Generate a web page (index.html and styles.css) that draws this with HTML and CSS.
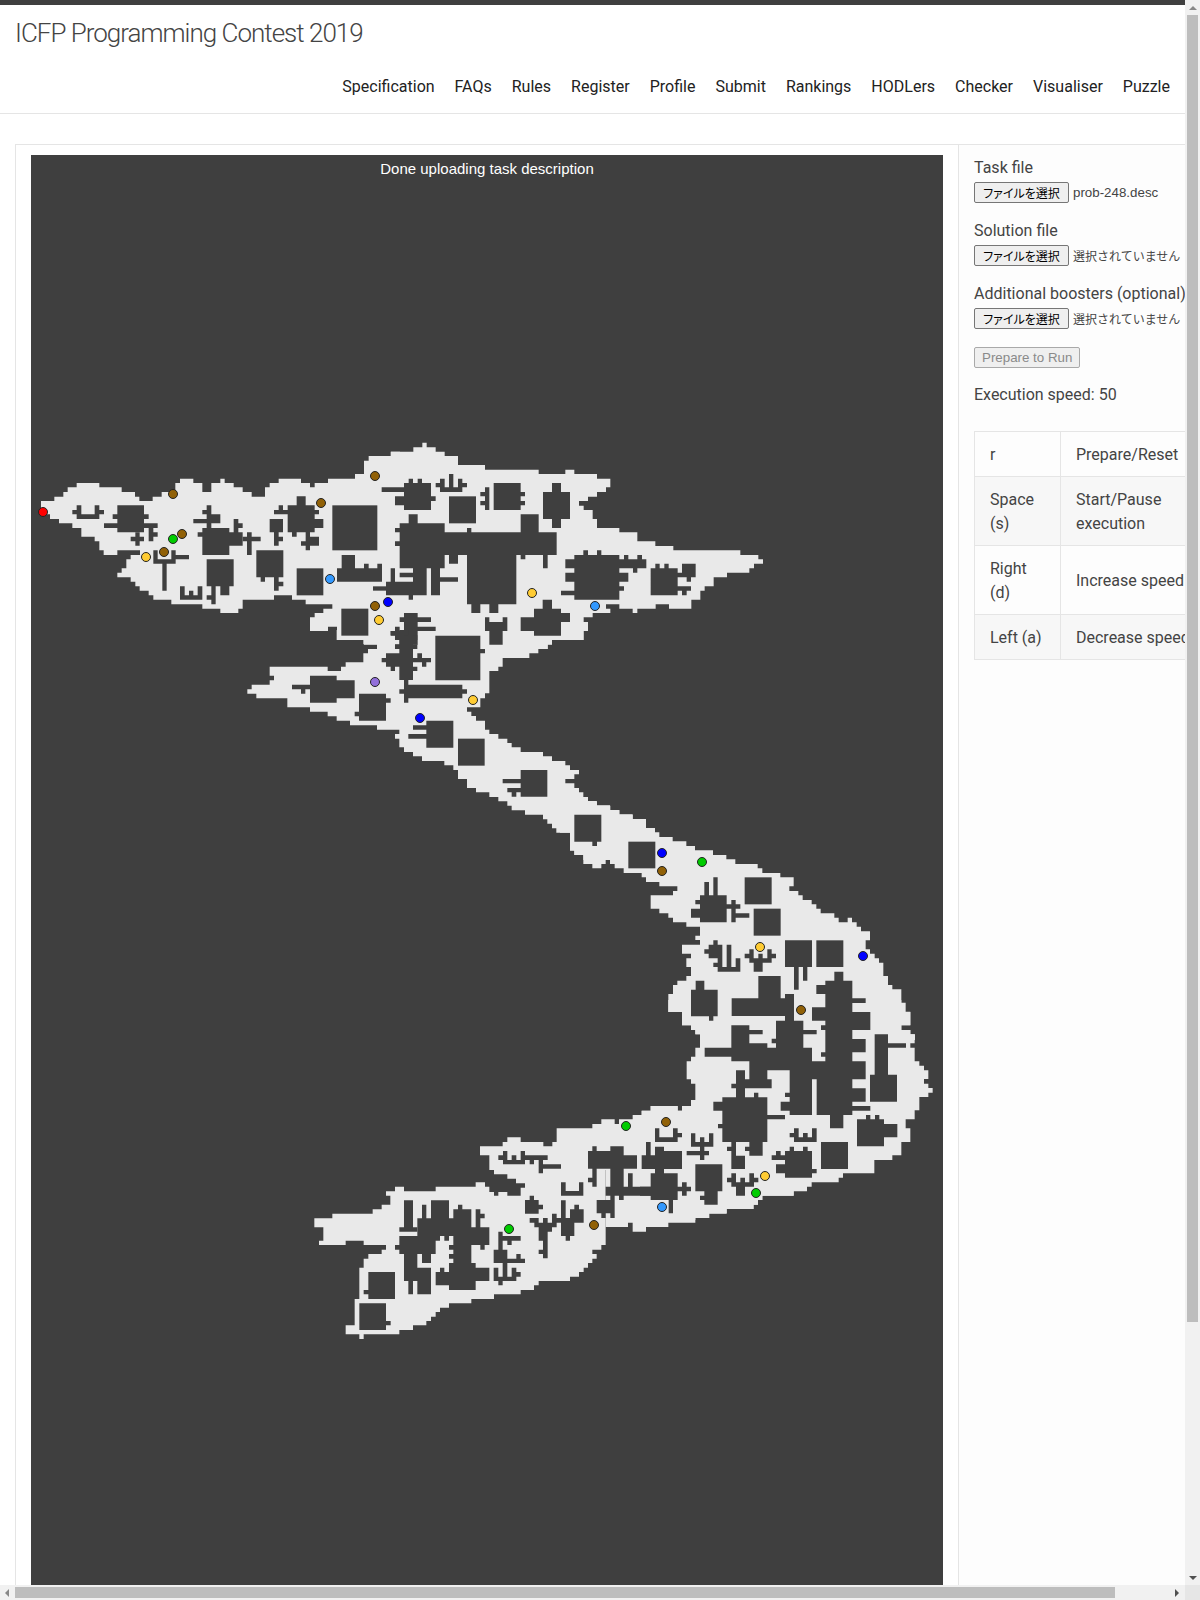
FILE: index.html
```html
<!DOCTYPE html>
<html lang="ja">
<head>
<meta charset="utf-8">
<title>ICFP Programming Contest 2019</title>
<link rel="stylesheet" href="styles.css">
</head>
<body>
<header class="site-header">
  <div class="brand">ICFP Programming Contest 2019</div>
  <nav class="nav">
    <a>Specification</a><a>FAQs</a><a>Rules</a><a>Register</a><a>Profile</a><a>Submit</a><a>Rankings</a><a>HODLers</a><a>Checker</a><a>Visualiser</a><a>Puzzle</a>
  </nav>
</header>
<main class="panel">
  <section class="stage">
    <div class="status">Done uploading task description</div>
    <svg class="map" viewBox="31 155 912 1700" width="912" height="1700" xmlns="http://www.w3.org/2000/svg">
      <rect x="31" y="155" width="912" height="1700" class="sea"/>
      <g class="land">
        <g transform="translate(30 430) scale(0.33333)">
          <polygon points="33,213 73,213 73,200 100,200 100,186 113,186 113,172 140,172 140,159 208,159 208,172 275,172 275,186 315,186 315,200 328,200 328,213 368,213 368,200 395,200 395,186 436,186 436,159 450,159 450,146 490,146 490,159 517,159 517,186 544,186 544,159 571,159 571,146 584,146 584,159 611,159 611,172 638,172 638,186 665,186 665,200 705,200 705,172 719,172 719,159 746,159 746,146 813,146 813,159 840,159 840,172 854,172 854,159 894,159 894,146 975,146 975,132 1002,132 1002,92 1016,92 1016,78 1083,78 1083,65 1110,65 1110,657 1041,657 1041,644 1002,644 1002,630 921,630 921,590 894,590 894,603 840,603 840,562 854,562 854,549 880,549 880,536 907,536 907,523 827,523 827,509 786,509 786,496 732,496 732,509 638,509 638,536 625,536 625,549 571,549 571,536 517,536 517,523 424,523 424,509 370,509 370,496 356,496 356,482 329,482 329,469 316,469 316,455 302,455 302,442 262,442 262,428 275,428 275,415 289,415 289,388 302,388 302,375 330,375 330,361 262,361 262,375 221,375 221,361 208,361 208,334 194,334 194,320 154,320 154,294 127,294 127,280 87,280 87,267 60,267 60,253 33,253"/>
        </g>
        <g transform="translate(380 430) scale(0.33333)">
          <polygon points="0,78 32,78 32,65 100,65 100,52 127,52 127,38 140,38 140,52 167,52 167,65 194,65 194,78 234,78 234,105 315,105 315,119 476,119 476,132 556,132 556,119 583,119 583,132 651,132 651,146 691,146 691,172 678,172 678,186 651,186 651,200 624,200 624,213 597,213 597,227 611,227 611,240 638,240 638,267 651,267 651,294 718,294 718,307 772,307 772,334 826,334 826,348 880,348 880,361 1081,361 1081,375 1135,375 1135,388 1149,388 1149,401 1122,401 1122,415 1108,415 1108,428 1041,428 1041,442 1001,442 1001,469 974,469 974,482 961,482 961,509 934,509 934,536 867,536 867,523 827,523 827,536 772,536 772,549 758,549 758,536 718,536 718,523 678,523 678,536 691,536 691,549 638,549 638,562 611,562 611,576 624,576 624,603 611,603 611,630 516,630 516,644 503,644 503,657 0,657"/>
        </g>
        <g transform="translate(240 630) scale(0.33333)">
          <polygon points="290,0 1030,0 1030,30 936,30 936,43 923,43 923,57 895,57 895,70 868,70 868,84 788,84 788,110 775,110 775,123 748,123 748,190 735,190 735,205 721,205 721,232 681,232 681,245 694,245 694,258 708,258 708,272 735,272 735,299 748,299 748,312 775,312 775,326 802,326 802,339 815,339 815,352 842,352 842,366 909,366 909,379 936,379 936,393 976,393 976,406 990,406 990,420 1017,420 1017,433 1003,433 1003,447 976,447 976,460 1003,460 1003,474 1017,474 1017,487 1030,487 1030,501 1044,501 1044,514 1071,514 1071,527 1111,527 1111,541 1138,541 1138,554 1178,554 1178,568 1200,568 1200,690 1030,690 1030,675 1003,675 1003,662 990,662 990,608 949,608 949,595 936,595 936,581 922,581 922,568 909,568 909,554 855,554 855,541 815,541 815,527 802,527 802,514 775,514 775,501 748,501 748,487 708,487 708,474 681,474 681,447 654,447 654,420 640,420 640,406 613,406 613,393 546,393 546,379 519,379 519,366 492,366 492,352 478,352 478,326 465,326 465,312 478,312 478,299 411,299 411,286 330,286 330,272 290,272 290,259 263,259 263,245 210,245 210,232 142,232 142,205 49,205 49,191 22,191 22,178 35,178 35,164 89,164 89,151 102,151 102,137 89,137 89,110 263,110 263,123 303,123 303,110 317,110 317,97 370,97 370,70 384,70 384,57 411,57 411,43 370,43 370,30 290,30"/>
        </g>
        <g transform="translate(560 800) scale(0.33333)">
          <polygon points="0,0 83,0 83,3 110,3 110,16 150,16 150,30 178,30 178,43 218,43 218,57 258,57 258,84 285,84 285,97 298,97 298,111 338,111 338,124 379,124 379,138 405,138 405,151 459,151 459,165 499,165 499,178 526,178 526,192 593,192 593,205 607,205 607,219 661,219 661,232 701,232 701,259 688,259 688,273 715,273 715,286 728,286 728,300 755,300 755,313 769,313 769,326 782,326 782,340 823,340 823,353 836,353 836,367 863,367 863,353 876,353 876,367 890,367 890,380 903,380 903,394 930,394 930,421 917,421 917,448 930,448 930,461 944,461 944,475 957,475 957,488 970,488 970,528 984,528 984,555 997,555 997,568 1024,568 1024,608 1037,608 1037,635 1051,635 1051,676 1024,676 1024,690 1051,690 1051,703 1065,703 1065,720 420,720 420,703 406,703 406,690 393,690 393,676 366,676 366,636 325,636 325,582 339,582 339,555 352,555 352,542 379,542 379,528 393,528 393,501 379,501 379,475 393,475 393,461 366,461 366,434 420,434 420,420 406,420 406,407 420,407 420,380 379,380 379,367 339,367 339,353 325,353 325,340 298,340 298,326 272,326 272,286 339,286 339,273 352,273 352,259 298,259 298,246 258,246 258,232 245,232 245,219 191,219 191,205 164,205 164,192 150,192 150,178 137,178 137,192 124,192 124,205 97,205 97,192 70,192 70,165 43,165 43,151 30,151 30,98 0,98"/>
        </g>
        <g transform="translate(640 1000) scale(0.33333)">
          <polygon points="85,0 85,36 126,36 126,76 153,76 153,90 166,90 166,103 180,103 180,143 166,143 166,170 153,170 153,184 140,184 140,238 153,238 153,251 166,251 166,305 153,305 153,318 126,318 126,332 113,332 113,318 32,318 32,332 5,332 5,345 0,345 0,660 166,660 166,654 208,654 208,640 260,640 260,627 340,627 340,614 354,614 354,600 367,600 367,587 461,587 461,574 501,574 501,560 515,560 515,547 596,547 596,533 609,533 609,520 703,520 703,480 757,480 757,466 784,466 784,426 811,426 811,385 797,385 797,358 824,358 824,331 838,331 838,291 865,291 865,278 878,278 878,264 865,264 865,251 852,251 852,237 865,237 865,211 852,211 852,197 838,197 838,184 824,184 824,143 811,143 811,130 824,130 824,103 811,103 811,90 784,90 784,76 811,76 811,36 784,36 784,0"/>
        </g>
        <g transform="translate(470 1100) scale(0.33333)">
          <polygon points="990,0 663,0 663,18 636,18 636,32 623,32 623,18 542,18 542,32 515,32 515,45 488,45 488,58 447,58 447,72 434,72 434,58 394,58 394,72 367,72 367,85 260,85 260,126 247,126 247,139 220,139 220,126 152,126 152,112 112,112 112,126 98,126 98,139 30,139 30,166 58,166 58,210 407,210 407,381 474,381 474,368 488,368 488,395 528,395 528,381 595,381 595,368 676,368 676,354 716,354 716,341 770,341 770,327 851,327 851,314 864,314 864,300 877,300 877,287 971,287 971,273 990,273"/>
        </g>
        <g transform="translate(300 1170) scale(0.33333)">
          <polygon points="568,0 582,0 582,13 622,13 622,26 648,26 648,40 675,40 675,53 662,53 662,77 622,77 622,66 595,66 595,77 582,77 582,66 568,66 568,50 555,50 555,37 527,37 527,50 407,50 407,64 312,64 312,50 285,50 285,64 258,64 258,77 271,77 271,104 245,104 245,118 218,118 218,131 97,131 97,145 43,145 43,172 70,172 70,212 57,212 57,225 137,225 137,212 191,212 191,225 258,225 258,239 245,239 245,252 205,252 205,266 191,266 191,293 178,293 178,387 164,387 164,466 137,466 137,493 178,493 178,507 191,507 191,493 298,493 298,480 339,480 339,466 379,466 379,453 393,453 393,440 407,440 407,426 420,426 420,413 447,413 447,400 514,400 514,387 582,387 582,373 662,373 662,360 702,360 702,346 716,346 716,333 810,333 810,320 837,320 837,306 851,306 851,293 864,293 864,279 877,279 877,266 890,266 890,252 877,252 877,239 904,239 904,225 917,225 917,0"/>
        </g>
      </g>
      <g class="wall">
        <g transform="translate(30 430) scale(0.33333)">
          <polygon points="140,226 154,226 154,253 194,253 194,226 208,226 208,240 222,240 222,253 208,253 208,267 140,267 140,253 127,253 127,240 140,240"/>
          <polygon points="262,226 342,226 342,253 356,253 356,267 342,267 342,280 383,280 383,294 370,294 370,307 383,307 383,320 370,320 370,334 356,334 356,294 342,294 342,307 262,307 262,294 222,294 222,280 262,280 262,267 248,267 248,253 262,253"/>
          <polygon points="316,307 329,307 329,320 342,320 342,334 329,334 329,347 316,347 316,334 302,334 302,320 316,320"/>
          <polygon points="530,226 544,226 544,253 571,253 571,280 544,280 544,294 530,294 530,280 490,280 490,267 530,267 530,253 517,253 517,240 530,240"/>
          <polygon points="517,294 598,294 598,307 611,307 611,267 625,267 625,280 638,280 638,294 625,294 625,307 638,307 638,347 598,347 598,375 517,375 517,320 503,320 503,307 517,307"/>
          <polygon points="651,307 665,307 665,320 692,320 692,334 665,334 665,375 651,375 651,334 638,334 638,320 651,320"/>
          <polygon points="800,199 827,199 827,226 854,226 854,240 867,240 867,253 854,253 854,267 880,267 880,294 854,294 854,307 840,307 840,320 867,320 867,347 840,347 840,361 827,361 827,347 813,347 813,334 827,334 827,307 800,307 800,320 786,320 786,307 773,307 773,267 759,267 759,307 746,307 746,320 759,320 759,334 746,334 746,347 732,347 732,307 719,307 719,267 773,267 773,253 732,253 732,240 746,240 746,226 759,226 759,240 773,240 773,226 800,226"/>
          <rect x="907" y="226" width="135" height="135"/>
          <polygon points="370,361 383,361 383,388 424,388 424,361 437,361 437,375 477,375 477,388 437,388 437,401 410,401 410,482 397,482 397,401 370,401"/>
          <polygon points="530,388 611,388 611,469 598,469 598,496 571,496 571,469 557,469 557,523 544,523 544,509 530,509 530,496 544,496 544,469 530,469"/>
          <polygon points="450,469 464,469 464,496 477,496 477,482 490,482 490,496 503,496 503,469 517,469 517,509 450,509"/>
          <polygon points="679,361 760,361 760,442 746,442 746,455 760,455 760,469 746,469 746,482 732,482 732,442 705,442 705,455 692,455 692,442 679,442"/>
          <rect x="800" y="415" width="80" height="81"/>
          <polygon points="935,375 975,375 975,415 1002,415 1002,401 1016,401 1016,415 1042,415 1042,401 1056,401 1056,455 921,455 921,415 935,415"/>
          <rect x="1029" y="469" width="50" height="13"/>
          <rect x="934" y="536" width="81" height="81"/>
        </g>
        <g transform="translate(380 430) scale(0.33333)">
          <polygon points="5,172 72,172 72,159 86,159 86,146 99,146 99,159 113,159 113,146 126,146 126,159 153,159 153,199 167,199 167,213 153,213 153,240 72,240 72,226 45,226 45,199 72,199 72,186 5,186"/>
          <polygon points="207,132 220,132 220,172 234,172 234,146 247,146 247,159 261,159 261,172 247,172 247,186 180,186 180,172 167,172 167,159 180,159 180,146 194,146 194,172 207,172"/>
          <rect x="207" y="199" width="81" height="81"/>
          <polygon points="341,159 422,159 422,186 435,186 435,199 422,199 422,213 435,213 435,226 422,226 422,240 341,240"/>
          <polygon points="315,172 328,172 328,240 315,240 315,226 301,226 301,213 315,213 315,199 301,199 301,186 315,186"/>
          <polygon points="516,159 543,159 543,186 570,186 570,267 543,267 543,294 516,294 516,267 489,267 489,186 516,186"/>
          <polygon points="86,253 113,253 113,280 194,280 194,307 261,307 261,294 274,294 274,307 422,307 422,253 476,253 476,307 530,307 530,375 503,375 503,415 489,415 489,375 436,375 436,388 422,388 422,375 409,375 409,523 355,523 355,549 328,549 328,523 301,523 301,549 274,549 274,523 261,523 261,375 234,375 234,401 207,401 207,375 194,375 194,415 180,415 180,442 234,442 234,455 180,455 180,496 153,496 153,415 140,415 140,496 99,496 99,509 86,509 86,496 18,496 18,455 32,455 32,415 45,415 45,455 99,455 99,442 59,442 59,428 99,428 99,415 59,415 59,348 45,348 45,334 59,334 59,307 45,307 45,294 59,294 59,280 86,280"/>
          <polygon points="583,375 610,375 610,361 624,361 624,375 651,375 651,361 664,361 664,375 718,375 718,388 732,388 732,375 745,375 745,388 772,388 772,375 786,375 786,388 799,388 799,415 772,415 772,428 759,428 759,415 718,415 718,428 745,428 745,455 718,455 718,469 732,469 732,482 718,482 718,509 583,509 583,496 543,496 543,482 583,482 583,455 556,455 556,428 583,428 583,415 556,415 556,388 583,388"/>
          <polygon points="812,415 826,415 826,401 839,401 839,415 853,415 853,401 866,401 866,415 893,415 893,428 906,428 906,401 947,401 947,442 933,442 933,455 920,455 920,442 893,442 893,469 933,469 933,482 920,482 920,496 906,496 906,482 893,482 893,496 812,496"/>
          <polygon points="488,509 516,509 516,536 543,536 543,549 570,549 570,576 543,576 543,617 462,617 462,603 422,603 422,562 462,562 462,536 488,536"/>
          <polygon points="315,562 328,562 328,576 368,576 368,562 382,562 382,603 368,603 368,644 328,644 328,603 315,603"/>
          <polygon points="72,549 113,549 113,562 153,562 153,576 113,576 113,590 167,590 167,603 113,603 113,644 99,644 99,657 45,657 45,644 59,644 59,617 32,617 32,603 45,603 45,590 59,590 59,603 72,603 72,576 59,576 59,562 72,562"/>
        </g>
        <g transform="translate(240 630) scale(0.33333)">
          <polygon points="478,0 492,0 492,16 505,16 505,0 519,0 519,16 532,16 532,30 519,30 519,43 532,43 532,57 519,57 519,84 532,84 532,70 546,70 546,84 573,84 573,97 559,97 559,110 546,110 546,97 519,97 519,110 532,110 532,123 519,123 519,150 505,150 505,164 667,164 667,178 681,178 681,191 667,191 667,205 505,205 505,218 492,218 492,191 478,191 478,178 492,178 492,150 478,150 478,110 465,110 465,123 452,123 452,110 438,110 438,97 425,97 425,84 438,84 438,70 478,70 478,57 465,57 465,43 478,43 478,30 465,30 465,16 452,16 452,3 478,3"/>
          <polygon points="586,17 721,17 721,57 735,57 735,70 721,70 721,151 586,151"/>
          <polygon points="210,137 290,137 290,151 344,151 344,205 290,205 290,218 210,218 210,178 196,178 196,191 183,191 183,178 156,178 156,164 210,164"/>
          <polygon points="357,191 438,191 438,205 452,205 452,218 438,218 438,272 357,272 357,259 344,259 344,245 357,245"/>
          <polygon points="519,286 559,286 559,272 640,272 640,353 559,353 559,326 505,326 505,312 559,312 559,299 519,299"/>
          <rect x="654" y="326" width="80" height="81"/>
          <polygon points="842,420 922,420 922,500 842,500 842,487 829,487 829,500 815,500 815,487 802,487 802,474 842,474 842,460 788,460 788,447 842,447"/>
          <polygon points="1003,554 1084,554 1084,635 1071,635 1071,648 1057,648 1057,635 1003,635"/>
        </g>
        <g transform="translate(560 800) scale(0.33333)">
          <rect x="205" y="125" width="81" height="80"/>
          <polygon points="433,246 447,246 447,286 460,286 460,232 473,232 473,286 500,286 500,313 514,313 514,300 527,300 527,313 541,313 541,326 527,326 527,340 568,340 568,353 527,353 527,367 514,367 514,326 500,326 500,367 420,367 420,353 393,353 393,326 420,326 420,313 406,313 406,300 420,300 420,286 433,286"/>
          <rect x="554" y="232" width="81" height="81"/>
          <rect x="581" y="326" width="81" height="81"/>
          <polygon points="675,421 756,421 756,501 742,501 742,542 729,542 729,501 716,501 716,569 702,569 702,501 675,501"/>
          <rect x="769" y="421" width="81" height="80"/>
          <polygon points="460,421 473,421 473,434 487,434 487,501 500,501 500,434 514,434 514,501 527,501 527,475 541,475 541,515 473,515 473,501 460,501 460,488 473,488 473,475 446,475 446,461 433,461 433,448 446,448 446,434 460,434"/>
          <polygon points="568,448 581,448 581,475 595,475 595,461 608,461 608,475 622,475 622,448 635,448 635,461 648,461 648,475 635,475 635,488 608,488 608,515 581,515 581,488 568,488 568,475 554,475 554,461 568,461"/>
          <polygon points="407,542 433,542 433,569 473,569 473,649 460,649 460,662 447,662 447,649 393,649 393,569 407,569"/>
        </g>
        <g transform="translate(640 1000) scale(0.33333)">
          <polygon points="583,-85 610,-85 610,-58 637,-58 637,-5 677,-5 677,9 637,9 637,36 691,36 691,90 637,90 637,117 677,117 677,157 637,157 637,184 677,184 677,238 637,238 637,265 677,265 677,305 637,305 637,318 691,318 691,332 637,332 637,345 610,345 610,385 570,385 570,345 530,345 530,238 516,238 516,345 449,345 449,332 422,332 422,305 449,305 449,291 435,291 435,278 449,278 449,211 382,211 382,238 395,238 395,265 315,265 315,292 342,292 342,278 355,278 355,292 382,292 382,345 435,345 435,358 382,358 382,426 368,426 368,467 328,467 328,453 315,453 315,440 328,440 328,426 288,426 288,467 315,467 315,507 274,507 274,453 261,453 261,440 274,440 274,426 247,426 247,385 234,385 234,372 247,372 247,332 220,332 220,305 247,305 247,292 288,292 288,265 274,265 274,251 288,251 288,211 315,211 315,238 328,238 328,184 274,184 274,170 194,170 194,143 274,143 274,76 328,76 328,90 368,90 368,103 328,103 328,130 382,130 382,143 408,143 408,130 395,130 395,116 408,116 408,62 435,62 435,48 275,48 275,-5 355,-5 355,-72 422,-72 422,-5 435,-5 435,-18 462,-18 462,62 490,62 490,90 530,90 530,103 490,103 490,143 516,143 516,184 556,184 556,170 543,170 543,157 556,157 556,90 543,90 543,76 556,76 556,62 516,62 516,22 556,22 556,-18 529,-18 529,-45 556,-45 556,-58 583,-58"/>
          <polygon points="704,103 744,103 744,130 798,130 798,143 744,143 744,224 771,224 771,305 690,305 690,224 704,224"/>
          <polygon points="651,358 678,358 678,345 691,345 691,358 705,358 705,345 718,345 718,358 732,358 732,372 772,372 772,412 732,412 732,439 651,439"/>
          <rect x="543" y="426" width="81" height="81"/>
          <polygon points="462,385 476,385 476,412 489,412 489,399 503,399 503,412 516,412 516,385 530,385 530,426 462,426 462,412 449,412 449,399 462,399"/>
          <polygon points="449,440 462,440 462,453 489,453 489,440 503,440 503,453 516,453 516,507 530,507 530,520 516,520 516,533 435,533 435,520 408,520 408,493 435,493 435,480 395,480 395,466 408,466 408,453 422,453 422,466 435,466 435,453 449,453"/>
          <polygon points="166,493 247,493 247,574 233,574 233,614 193,614 193,600 180,600 180,587 193,587 193,574 166,574"/>
          <polygon points="261,533 274,533 274,520 288,520 288,547 301,547 301,533 315,533 315,547 328,547 328,520 342,520 342,533 355,533 355,547 342,547 342,560 315,560 315,587 288,587 288,560 274,560 274,547 261,547"/>
          <polygon points="153,400 166,400 166,426 180,426 180,412 193,412 193,426 207,426 207,400 220,400 220,440 193,440 193,453 207,453 207,466 193,466 193,480 180,480 180,466 140,466 140,453 180,453 180,440 153,440"/>
          <polygon points="45,385 58,385 58,412 99,412 99,385 113,385 113,399 126,399 126,412 113,412 113,426 45,426"/>
          <polygon points="18,426 32,426 32,466 45,466 45,440 72,440 72,453 126,453 126,507 72,507 72,520 113,520 113,560 126,560 126,547 140,547 140,560 153,560 153,574 140,574 140,587 126,587 126,574 113,574 113,600 99,600 99,640 86,640 86,600 32,600 32,587 0,587 0,560 32,560 32,520 45,520 45,507 5,507 5,466 18,466"/>
        </g>
        <g transform="translate(470 1100) scale(0.33333)">
          <polygon points="354,153 367,153 367,139 380,139 380,153 421,153 421,139 461,139 461,166 501,166 501,206 461,206 461,260 474,260 474,220 488,220 488,260 545,260 545,287 461,287 461,300 447,300 447,287 434,287 434,354 421,354 421,340 407,340 407,354 394,354 394,340 380,340 380,300 421,300 421,287 407,287 407,260 421,260 421,206 380,206 380,260 367,260 367,247 354,247 354,233 367,233 367,206 354,206"/>
          <polygon points="99,153 112,153 112,180 125,180 125,166 139,166 139,180 152,180 152,153 165,153 165,166 233,166 233,180 219,180 219,193 273,193 273,206 219,206 219,220 206,220 206,180 192,180 192,193 179,193 179,180 165,180 165,193 99,193 99,180 85,180 85,166 99,166"/>
          <polygon points="273,247 287,247 287,273 327,273 327,247 340,247 340,287 273,287"/>
        </g>
        <g transform="translate(300 1170) scale(0.33333)">
          <polygon points="675,90 689,90 689,77 702,77 702,90 716,90 716,104 729,104 729,118 716,118 716,131 675,131"/>
          <polygon points="689,144 716,144 716,158 729,158 729,144 743,144 743,158 756,158 756,131 770,131 770,144 783,144 783,91 797,91 797,144 810,144 810,118 823,118 823,104 837,104 837,118 851,118 851,158 823,158 823,198 810,198 810,212 797,212 797,198 783,198 783,158 770,158 770,172 756,172 756,185 743,185 743,265 729,265 729,252 716,252 716,239 729,239 729,212 716,212 716,172 703,172 703,158 689,158"/>
          <polygon points="312,91 339,91 339,172 352,172 352,185 298,185 298,172 312,172"/>
          <polygon points="366,104 379,104 379,145 393,145 393,91 447,91 447,145 460,145 460,118 474,118 474,104 487,104 487,118 514,118 514,172 527,172 527,118 541,118 541,131 554,131 554,145 541,145 541,172 568,172 568,225 554,225 554,239 541,239 541,225 514,225 514,279 527,279 527,293 568,293 568,333 527,333 527,360 447,360 447,346 407,346 407,306 420,306 420,293 433,293 433,306 447,306 447,279 460,279 460,266 447,266 447,252 460,252 460,239 447,239 447,225 460,225 460,198 447,198 447,212 433,212 433,198 420,198 420,212 407,212 407,252 393,252 393,279 366,279 366,252 352,252 352,293 393,293 393,373 352,373 352,333 339,333 339,373 325,373 325,333 312,333 312,252 298,252 298,239 285,239 285,225 298,225 298,198 352,198 352,145 366,145"/>
          <polygon points="595,185 608,185 608,198 662,198 662,212 635,212 635,225 622,225 622,212 608,212 608,239 622,239 622,266 649,266 649,252 662,252 662,266 675,266 675,279 622,279 622,320 635,320 635,293 649,293 649,306 662,306 662,320 649,320 649,333 608,333 608,346 595,346 595,333 581,333 581,293 595,293 595,320 608,320 608,279 581,279 581,239 595,239"/>
          <polygon points="205,306 285,306 285,387 205,387 205,373 191,373 191,360 205,360"/>
          <polygon points="178,400 258,400 258,453 272,453 272,466 258,466 258,480 178,480"/>
        </g>
      </g>
      <g class="dots">
        <circle class="red" cx="43" cy="512" r="4"/>
        <circle class="brown" cx="173" cy="494" r="4"/><circle class="brown" cx="321" cy="503" r="4"/><circle class="brown" cx="375" cy="476" r="4"/><circle class="brown" cx="182" cy="534" r="4"/><circle class="brown" cx="164" cy="552" r="4"/><circle class="brown" cx="375" cy="606" r="4"/><circle class="brown" cx="662" cy="871" r="4"/><circle class="brown" cx="801" cy="1010" r="4"/><circle class="brown" cx="666" cy="1122" r="4"/><circle class="brown" cx="594" cy="1225" r="4"/>
        <circle class="green" cx="173" cy="539" r="4"/><circle class="green" cx="702" cy="862" r="4"/><circle class="green" cx="756" cy="1193" r="4"/><circle class="green" cx="626" cy="1126" r="4"/><circle class="green" cx="509" cy="1229" r="4"/>
        <circle class="yellow" cx="146" cy="557" r="4"/><circle class="yellow" cx="379" cy="620" r="4"/><circle class="yellow" cx="532" cy="593" r="4"/><circle class="yellow" cx="473" cy="700" r="4"/><circle class="yellow" cx="760" cy="947" r="4"/><circle class="yellow" cx="765" cy="1176" r="4"/>
        <circle class="sky" cx="330" cy="579" r="4"/><circle class="sky" cx="595" cy="606" r="4"/><circle class="sky" cx="662" cy="1207" r="4"/>
        <circle class="blue" cx="388" cy="602" r="4"/><circle class="blue" cx="420" cy="718" r="4"/><circle class="blue" cx="662" cy="853" r="4"/><circle class="blue" cx="863" cy="956" r="4"/>
        <circle class="purple" cx="375" cy="682" r="4"/>
      </g>
    </svg>
  </section>
  <aside class="side">
    <div class="field">
      <label class="field-label">Task file</label>
      <div class="file-row"><button class="file-btn" type="button">ファイルを選択</button><span class="file-name">prob-248.desc</span></div>
    </div>
    <div class="field">
      <label class="field-label">Solution file</label>
      <div class="file-row"><button class="file-btn" type="button">ファイルを選択</button><span class="file-name file-none">選択されていません</span></div>
    </div>
    <div class="field">
      <label class="field-label">Additional boosters (optional)</label>
      <div class="file-row"><button class="file-btn" type="button">ファイルを選択</button><span class="file-name file-none">選択されていません</span></div>
    </div>
    <button class="run-btn" type="button" disabled>Prepare to Run</button>
    <p class="speed">Execution speed: 50</p>
    <table class="keys">
      <tr><td class="key">r</td><td>Prepare/Reset</td></tr>
      <tr><td class="key">Space (s)</td><td>Start/Pause execution</td></tr>
      <tr><td class="key">Right (d)</td><td>Increase speed</td></tr>
      <tr><td class="key">Left (a)</td><td>Decrease speed</td></tr>
    </table>
  </aside>
</main>
<div class="vbar" aria-hidden="true">
  <span class="arrow arrow-up"></span>
  <span class="vthumb"></span>
  <span class="arrow arrow-down"></span>
</div>
<div class="hbar" aria-hidden="true">
  <span class="arrow arrow-left"></span>
  <span class="hthumb"></span>
  <span class="arrow arrow-right"></span>
</div>
<div class="corner" aria-hidden="true"></div>
</body>
</html>
```
FILE: styles.css
```css
html, body {
  height: 1600px;
  overflow: hidden;
}
body {
  margin: 0;
  font-family: Roboto, "Noto Sans", sans-serif;
  font-size: 16px;
  line-height: 24px;
  color: #444;
  background: #fff;
}
.site-header {
  width: 1185px;
  box-sizing: border-box;
  border-top: 5px solid #3f3f3f;
  border-bottom: 1px solid #e5e5e5;
  padding: 0 15px 15px;
  height: 114px;
}
.brand {
  font-weight: 300;
  font-size: 26px;
  line-height: 56px;
  letter-spacing: -1px;
  color: #444;
}
.nav {
  display: flex;
  justify-content: flex-end;
  gap: 20px;
  padding-top: 14px;
  color: #222;
}
.panel {
  display: flex;
  margin: 30px 0 0 15px;
  border: 1px solid #e5e5e5;
  border-bottom: 0;
  width: 1240px;
  box-sizing: border-box;
}
.stage {
  position: relative;
  flex: none;
  width: 912px;
  padding: 10px 15px 0;
}
.map { display: block; }
.sea { fill: #3f3f3f; }
.land { fill: #e9e9e9; }
.wall { fill: #3f3f3f; }
.dots circle { r: 4.5px; stroke: #222; stroke-width: 1; }
.red { fill: #ff0000; }
.brown { fill: #916107; }
.green { fill: #00cc00; }
.yellow { fill: #ffcc33; }
.sky { fill: #3399ff; }
.blue { fill: #0000ff; }
.purple { fill: #9370db; }
.status {
  position: absolute;
  left: 15px;
  right: 15px;
  top: 14px;
  text-align: center;
  font-family: "Liberation Sans", Arial, sans-serif;
  font-size: 15px;
  line-height: 20px;
  color: #fff;
}
.side {
  flex: 1;
  border-left: 1px solid #e5e5e5;
  padding: 11px 15px 0;
  min-width: 0;
  background: #fdfdfd;
}
.field { margin-bottom: 16px; }
.field-label { display: block; white-space: nowrap; }
.file-row {
  display: flex;
  align-items: center;
  gap: 4px;
  margin-top: 2px;
  height: 21px;
  white-space: nowrap;
}
.file-btn, .run-btn {
  box-sizing: border-box;
  height: 21px;
  border: 1px solid #767676;
  border-radius: 2px;
  background: #efefef;
  color: #000;
  line-height: 19px;
}
.file-btn {
  flex: none;
  width: 95px;
  padding: 0;
  font-family: "Noto Sans CJK JP", sans-serif;
  font-size: 12px;
  font-feature-settings: "palt";
}
.run-btn {
  display: block;
  margin-top: 18px;
  padding: 0 7px;
  border-color: #a9a9a9;
  color: #8a8a8a;
  font-family: "Liberation Sans", sans-serif;
  font-size: 13.33px;
}
.file-name {
  font-family: "Liberation Sans", sans-serif;
  font-size: 13.33px;
  color: #444;
}
.file-none {
  font-family: "Noto Sans CJK JP", sans-serif;
  font-size: 12px;
}
.speed { margin: 15px 0 24px; }
.keys {
  border-collapse: collapse;
  width: 250px;
  table-layout: fixed;
}
.keys td {
  border: 1px solid #e5e5e5;
  padding: 11px 15px 9px;
}
.keys .key { width: 55px; }
.keys tr:nth-child(even) td { background: #f7f7f7; }
.vbar, .hbar, .corner {
  position: fixed;
  background: #f1f1f1;
}
.vbar {
  top: 0;
  right: 0;
  bottom: 15px;
  width: 15px;
  display: flex;
  flex-direction: column;
  align-items: center;
}
.hbar {
  left: 0;
  right: 15px;
  bottom: 0;
  height: 15px;
  display: flex;
  align-items: center;
}
.corner {
  right: 0;
  bottom: 0;
  width: 15px;
  height: 15px;
  background: #e6e6e6;
}
.vthumb {
  width: 11px;
  height: 1307px;
  margin-top: 5px;
  background: #bdbdbd;
}
.hthumb {
  width: 1100px;
  height: 11px;
  margin-left: 6px;
  background: #bdbdbd;
}
.arrow {
  width: 0;
  height: 0;
  border-style: solid;
  border-color: transparent;
}
.arrow-up {
  margin-top: 6px;
  border-width: 0 4px 4px;
  border-bottom-color: #888;
}
.arrow-down {
  margin-top: auto;
  margin-bottom: 5px;
  border-width: 4px 4px 0;
  border-top-color: #505050;
}
.arrow-left {
  margin-left: 5px;
  border-width: 4px 4px 4px 0;
  border-right-color: #888;
}
.arrow-right {
  margin-left: auto;
  margin-right: 6px;
  border-width: 4px 0 4px 4px;
  border-left-color: #505050;
}
```
